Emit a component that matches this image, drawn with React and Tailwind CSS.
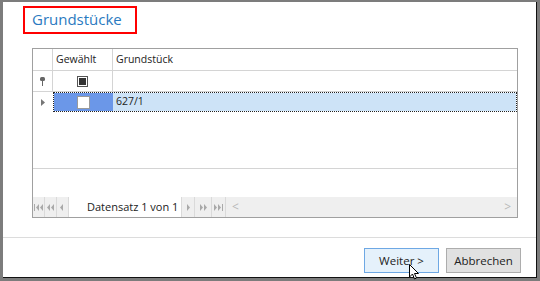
import React from "react";

const font = { fontFamily: '"Open Sans", "Noto Sans", sans-serif' };

function NavIcon({ kind }) {
  // small disabled navigator glyphs
  const c = "#a9a9a9";
  const shapes = {
    first: (
      <>
        <rect x="0" y="0" width="1" height="7" fill={c} />
        <polygon points="5,0 2,3.5 5,7" fill={c} />
        <polygon points="9,0 6,3.5 9,7" fill={c} />
      </>
    ),
    prevPage: (
      <>
        <polygon points="4,0 1,3.5 4,7" fill={c} />
        <polygon points="8,0 5,3.5 8,7" fill={c} />
      </>
    ),
    prev: <polygon points="5,0 2,3.5 5,7" fill={c} />,
    next: <polygon points="3,0 6,3.5 3,7" fill={c} />,
    nextPage: (
      <>
        <polygon points="1,0 4,3.5 1,7" fill={c} />
        <polygon points="5,0 8,3.5 5,7" fill={c} />
      </>
    ),
    last: (
      <>
        <polygon points="0,0 3,3.5 0,7" fill={c} />
        <polygon points="4,0 7,3.5 4,7" fill={c} />
        <rect x="8" y="0" width="1" height="7" fill={c} />
      </>
    ),
  };
  return (
    <svg width="9" height="7" viewBox="0 0 9 7">
      {shapes[kind]}
    </svg>
  );
}

function NavButton({ kind, w = "w-[12px]" }) {
  return (
    <div className={`${w} shrink-0 h-full flex items-center justify-center border-r border-[#dadada]`}>
      <NavIcon kind={kind} />
    </div>
  );
}

export default function App() {
  return (
    <div
      className="relative w-[540px] h-[281px] bg-[#7c7c7c] pt-[2px] pl-[3px] pr-[3px] pb-[3px] flex"
      style={font}
    >
      <div className="flex-1 bg-white border-r border-b border-[#111] flex flex-col">
        {/* Title */}
        <div className="ml-[20px] mt-[4px] w-[114px] h-[28px] border-2 border-[#ff0000] flex items-center pl-[7px]">
          <span className="text-[15px] leading-none text-[#2a7ac0] -mt-[2px] whitespace-nowrap">Grundstücke</span>
        </div>

        {/* Grid */}
        <div className="ml-[29px] mt-[14px] w-[486px] h-[170px] border border-[#a0a0a0] flex flex-col text-[10.5px] text-[#222]">
          {/* header */}
          <div className="h-[22px] flex border-b border-[#d4d4d4] shrink-0">
            <div className="w-[20px] border-r border-[#d4d4d4]" />
            <div className="w-[60px] border-r border-[#d4d4d4] flex items-center pl-[3px]">Gewählt</div>
            <div className="flex-1 flex items-center pl-[3px]">Grundstück</div>
          </div>
          {/* filter row */}
          <div className="h-[21px] flex border-b border-[#d4d4d4] shrink-0">
            <div className="w-[20px] border-r border-[#d4d4d4] flex items-center justify-center">
              <svg width="7" height="9" viewBox="0 0 7 9">
                <rect x="1" y="0" width="5" height="4" rx="1.5" fill="#666" />
                <rect x="3" y="4" width="1" height="5" fill="#666" />
              </svg>
            </div>
            <div className="w-[60px] border-r border-[#d4d4d4] flex items-center justify-center">
              <div className="w-[11px] h-[11px] border border-[#555] bg-white flex items-center justify-center">
                <div className="w-[7px] h-[7px] bg-[#333]" />
              </div>
            </div>
            <div className="flex-1" />
          </div>
          {/* data row */}
          <div className="h-[20px] flex shrink-0">
            <div className="w-[20px] flex items-center justify-center">
              <svg width="4" height="7" viewBox="0 0 4 7">
                <polygon points="0,0 4,3.5 0,7" fill="#777" />
              </svg>
            </div>
            <div className="flex-1 flex border border-dotted border-[#222]">
              <div className="w-[59px] bg-[#6b97e8] flex items-center justify-center">
                <div className="w-[13px] h-[13px] border border-[#9a9a9a] bg-white" />
              </div>
              <div className="flex-1 bg-[#cde3f7] flex items-center pl-[3px]">627/1</div>
            </div>
          </div>
          {/* empty area */}
          <div className="h-[57px] border-b border-[#d4d4d4] shrink-0" />
          <div className="flex-1" />
          {/* navigator */}
          <div className="h-[20px] flex bg-[#efefef] shrink-0 items-stretch">
            <NavButton kind="first" />
            <NavButton kind="prevPage" />
            <NavButton kind="prev" />
            <div className="w-[113px] shrink-0 bg-white border-r border-[#dadada] flex items-center pl-[18px] text-[11px] text-[#222] whitespace-nowrap">
              Datensatz 1 von 1
            </div>
            <NavButton kind="next" w="w-[13px]" />
            <NavButton kind="nextPage" w="w-[17px]" />
            <NavButton kind="last" w="w-[14px]" />
            <div className="flex-1 flex items-center justify-between px-[6px] text-[12px] text-[#b8b8b8]">
              <span>&lt;</span>
              <span>&gt;</span>
            </div>
          </div>
        </div>

        {/* separator */}
        <div className="mt-[19px] border-t border-[#dcdcdc]" />

        {/* buttons */}
        <div className="mt-[10px] flex justify-end gap-[7px] pr-[15px] text-[11.5px] text-[#222]">
          <button className="w-[75px] h-[25px] bg-[#e5f1fb] border border-[#6ea8e4] flex items-center justify-center">
            Weiter &gt;
          </button>
          <button className="w-[75px] h-[25px] bg-[#e1e1e1] border border-[#adadad] flex items-center justify-center">
            Abbrechen
          </button>
        </div>
      </div>

      {/* mouse cursor */}
      <svg className="absolute left-[409px] top-[264px]" width="11" height="17" viewBox="0 0 11 17">
        <polygon
          points="0.5,0.5 0.5,13 3.5,10 5.5,15 7.5,14 5.5,9.5 9.5,9.5"
          fill="#fff"
          stroke="#000"
          strokeWidth="1"
        />
      </svg>
    </div>
  );
}
